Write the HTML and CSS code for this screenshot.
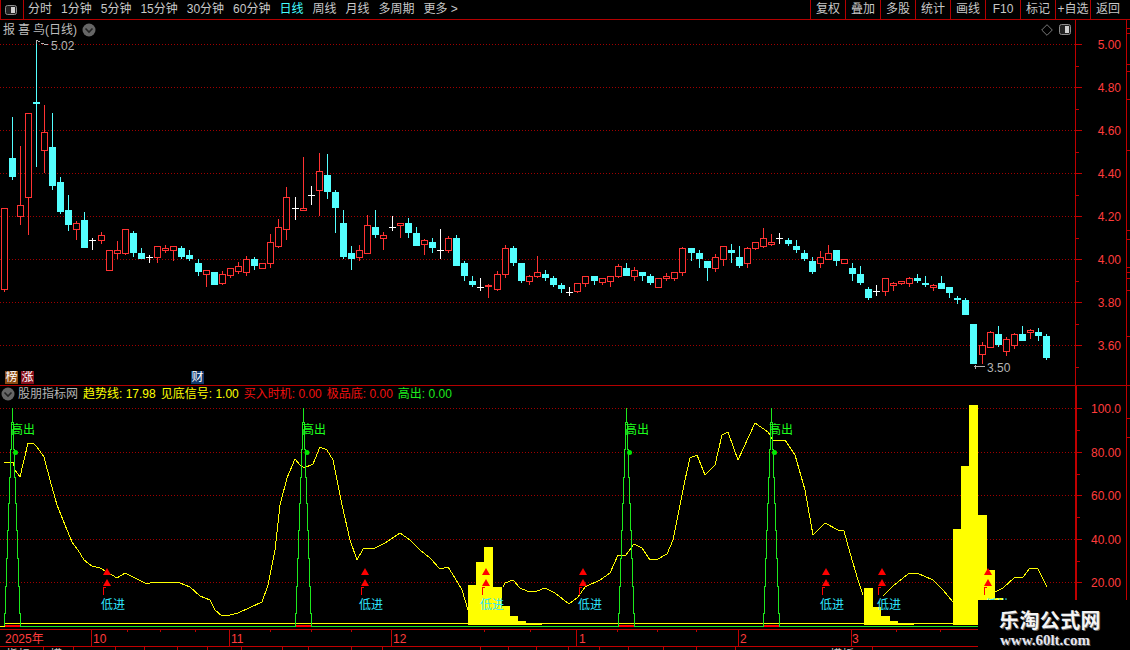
FILE: index.html
```html
<!DOCTYPE html>
<html lang="zh">
<head>
<meta charset="utf-8">
<title>报喜鸟(日线)</title>
<link rel="stylesheet" href="styles.css">
</head>
<body>
<div class="app">
  <header class="toolbar">
    <div class="panel-btn">
      <svg class="panel-icon" width="14" height="12" viewBox="0 0 14 12"><rect class="pi-frame" x="1.5" y="1.5" width="11" height="9" rx="2"/><rect class="pi-fill" x="7" y="3" width="4" height="6"/></svg>
    </div>
    <nav class="periods">
      <span>分时</span><span>1分钟</span><span>5分钟</span><span>15分钟</span><span>30分钟</span><span>60分钟</span><span class="active">日线</span><span>周线</span><span>月线</span><span>多周期</span><span>更多 &gt;</span>
    </nav>
    <nav class="tools">
      <span>复权</span><span>叠加</span><span>多股</span><span>统计</span><span>画线</span><span>F10</span><span>标记</span><span>+自选</span><span>返回</span>
    </nav>
  </header>

  <section class="pane pane-main">
    <svg id="mainChart" class="plot" width="1130" height="365" viewBox="0 20 1130 365"></svg>
    <div class="title">
      <span class="stock">报喜鸟</span><span>(日线)</span>
      <svg class="chev" width="14" height="14" viewBox="0 0 14 14"><circle class="chev-bg" cx="7" cy="7" r="6.5"/><polyline class="chev-line" points="3.5,5.5 7,9 10.5,5.5"/></svg>
    </div>
    <div class="pane-icons">
      <svg width="12" height="12" viewBox="0 0 12 12"><polygon class="diamond" points="6,0.7 11.3,6 6,11.3 0.7,6"/></svg>
      <svg width="14" height="12" viewBox="0 0 14 12"><rect class="pi-frame" x="1.5" y="0.5" width="11" height="10" rx="2"/><rect class="pi-fill" x="7" y="2" width="4" height="7"/></svg>
    </div>
    <div class="badge b-bang">榜</div>
    <div class="badge b-zhang">涨</div>
    <div class="badge b-cai">财</div>
  </section>

  <section class="pane pane-lower">
    <svg id="lowerChart" class="plot" width="1130" height="243" viewBox="0 386 1130 243"></svg>
    <div class="legend">
      <svg class="chev" width="14" height="14" viewBox="0 0 14 14"><circle class="chev-bg" cx="7" cy="7" r="6.5"/><polyline class="chev-line" points="3.5,5.5 7,9 10.5,5.5"/></svg>
      <span class="name">股朋指标网</span>
      <span class="yellow">趋势线: 17.98</span>
      <span class="yellow">见底信号: 1.00</span>
      <span class="red">买入时机: 0.00</span>
      <span class="red">极品底: 0.00</span>
      <span class="green">高出: 0.00</span>
    </div>
  </section>

  <svg id="dateAxis" class="dates" width="1130" height="17" viewBox="0 630 1130 17"></svg>
  <svg id="tabStrip" class="tabs" width="1130" height="3" viewBox="0 647 1130 3"></svg>

  <aside class="watermark">
    <div class="wm-name">乐淘公式网</div>
    <div class="wm-url">www.60lt.com</div>
  </aside>
</div>
<script src="chart.js"></script>
</body>
</html>
```
FILE: styles.css
```css
* { box-sizing: border-box; }
html, body { margin: 0; padding: 0; background: #000; }
body { font-family: "Liberation Sans", "Noto Sans CJK SC", sans-serif; font-size: 12px; color: #c8c8c8; overflow: hidden; }
.app { position: relative; width: 1130px; height: 650px; display: flex; flex-direction: column; background: #000; overflow: hidden; }

.toolbar { height: 20px; flex: none; display: flex; align-items: center; border-bottom: 1px solid #b40000; line-height: 19px; }
.panel-btn { width: 24px; height: 19px; flex: none; display: flex; align-items: center; padding-left: 3px; border-right: 1px solid #b40000; border-left: 1px solid #b40000; }
.pi-frame { fill: #222; stroke: #8c8c8c; stroke-width: 1; }
.pi-fill { fill: #d0d0d0; }
.periods { display: flex; gap: 9px; padding-left: 4px; flex: 1; }
.periods .active { color: #4ff; }
.tools { display: flex; margin-right: 5px; }
.tools span { width: 35px; height: 19px; text-align: center; border-left: 1px solid #b40000; }

.pane { position: relative; flex: none; }
.pane-main { height: 366px; border-bottom: 1px solid #b40000; }
.pane-lower { height: 244px; border-bottom: 1px solid #c00000; }
.plot { display: block; }

.title { position: absolute; left: 3px; top: 2px; display: flex; align-items: center; color: #bdbdbd; line-height: 16px; }
.stock { letter-spacing: 3px; margin-right: -3px; }
.title .chev { margin-left: 5px; }
.chev-bg { fill: #666; }
.chev-line { fill: none; stroke: #222; stroke-width: 1.6; }
.pane-icons { position: absolute; left: 1041px; top: 4px; display: flex; gap: 5px; }
.diamond { fill: none; stroke: #7a7a7a; stroke-width: 1; }

.badge { position: absolute; top: 351px; width: 13px; height: 13px; color: #fff; font-size: 12px; line-height: 13px; text-align: center; overflow: hidden; }
.b-bang { left: 5px; background: #8a4a12; }
.b-zhang { left: 21px; background: #860f1c; }
.b-cai { left: 191px; background: #10396e; }

.legend { position: absolute; left: 1px; top: 0; height: 16px; display: flex; align-items: center; gap: 5px; line-height: 16px; white-space: nowrap; }
.legend .chev { margin-right: -2px; }
.legend .name { color: #b4b4b4; }
.yellow { color: #ff0; }
.red { color: #f01010; }
.green { color: #1de91d; }

.dates, .tabs { display: block; flex: none; }
.dates { border-bottom: 0; }

.watermark { position: absolute; left: 978px; top: 600px; width: 152px; height: 50px; background: #000; padding: 8px 0 0 21px; }
.wm-name { font-family: "Noto Sans CJK SC", sans-serif; font-weight: 700; font-size: 20px; line-height: 24px; letter-spacing: 0.4px; color: #f4f4f4; text-shadow: 1px 1px 0 #666; white-space: nowrap; }
.wm-url { font-family: "Liberation Serif", serif; font-weight: 700; font-size: 15px; line-height: 16px; margin-top: 0; margin-left: 1px; color: #e6e6f0; text-shadow: 1px 1px 0 #555; white-space: nowrap; }

/* chart primitives */
.crisp { shape-rendering: crispEdges; }
.grid { stroke: #a00000; stroke-width: 1; stroke-dasharray: 1 2; shape-rendering: crispEdges; }
.axis { stroke: #c00000; stroke-width: 1; shape-rendering: crispEdges; fill: none; }
.axis-thick { stroke: #c00000; stroke-width: 2; shape-rendering: crispEdges; }
.axis-label { fill: #ff3c3c; font-size: 12px; font-family: "Liberation Sans", "Noto Sans CJK SC", sans-serif; }
.c-red { fill: #000; stroke: #ff3232; stroke-width: 1; shape-rendering: crispEdges; }
.w-red { stroke: #ff3232; stroke-width: 1; shape-rendering: crispEdges; }
.c-cyan { fill: #54ffff; shape-rendering: crispEdges; }
.w-cyan { stroke: #54ffff; stroke-width: 1; shape-rendering: crispEdges; }
.w-white { stroke: #fff; stroke-width: 1; shape-rendering: crispEdges; }
.note { fill: #b4b4b4; font-size: 12px; font-family: "Liberation Sans", sans-serif; }
.note-line { stroke: #b4b4b4; stroke-width: 1; fill: none; shape-rendering: crispEdges; }
.bar { fill: #ff0; shape-rendering: crispEdges; }
.trend { fill: none; stroke: #ff0; stroke-width: 1; shape-rendering: crispEdges; }
.base-y { stroke: #ff0; stroke-width: 1; shape-rendering: crispEdges; }
.base-g { stroke: #1de91d; stroke-width: 1; shape-rendering: crispEdges; }
.base-r { stroke: #ff0000; stroke-width: 2; shape-rendering: crispEdges; }
.spike { fill: none; stroke: #1de91d; stroke-width: 1; shape-rendering: crispEdges; }
.dot { fill: #00e800; }
.high { fill: #1dff1d; font-size: 12px; font-family: "Noto Sans CJK SC", sans-serif; }
.low { fill: #2ee6ff; font-size: 12px; font-family: "Noto Sans CJK SC", sans-serif; }
.tri { fill: #f00; }
.up { fill: none; stroke: #f00; stroke-width: 1; shape-rendering: crispEdges; }
.tab-text { fill: #c8c8c8; font-size: 12px; font-family: "Noto Sans CJK SC", sans-serif; }
```
FILE: chart.js
```js
var NS = 'http://www.w3.org/2000/svg';
function el(parent, tag, cls, attrs, text) {
  var n = document.createElementNS(NS, tag);
  if (cls) n.setAttribute('class', cls);
  for (var k in attrs) n.setAttribute(k, attrs[k]);
  if (text !== undefined) n.textContent = text;
  parent.appendChild(n);
  return n;
}
function line(p, cls, x1, y1, x2, y2) { return el(p, 'line', cls, { x1: x1, y1: y1, x2: x2, y2: y2 }); }

/* kind, body top, body bottom, wick top, wick bottom (pixel rows) */
var CANDLES = [
['r',208,290,208,292],['c',158,177,117,180],['r',205,217,146,225],['r',113,198,113,235],['c',102,104,40,167],
['r',132,151,105,173],['c',147,186,113,190],['c',182,212,177,214],['c',210,225,195,231],['r',223,230,221,240],
['c',220,248,212,248],['w',240,240,238,250],['r',235,241,232,244],['r',250,271,250,271],['r',250,254,241,259],
['r',229,254,229,255],['c',233,253,231,257],['c',253,259,248,259],['w',257,257,255,263],['r',246,258,246,263],
['r',248,251,245,253],['r',246,251,246,261],['c',248,257,246,259],['c',255,259,250,261],['c',263,272,259,276],
['r',270,275,270,287],['c',272,285,272,285],['r',274,284,271,285],['r',268,276,268,278],['r',266,272,262,274],
['r',259,273,256,276],['c',259,266,257,270],['r',263,269,263,269],['r',242,264,234,268],['r',227,247,219,248],
['r',197,230,187,240],['w',208,208,197,220],['r',208,211,157,211],['w',195,195,186,205],['r',171,191,153,216],
['c',175,192,154,199],['c',192,208,190,233],['c',223,257,210,259],['c',253,259,246,270],['r',250,258,245,261],
['r',225,254,215,254],['c',227,235,210,238],['r',235,239,232,250],['w',227,227,216,231],['r',223,226,223,238],
['c',223,233,218,238],['c',233,246,227,246],['r',240,245,239,255],['c',242,248,238,253],['w',250,250,229,259],
['r',238,251,236,253],['c',238,266,235,266],['c',263,276,261,281],['c',281,285,276,287],['w',287,287,278,291],
['r',285,287,284,298],['r',274,290,271,291],['r',248,275,245,278],['c',248,263,246,266],['c',263,281,263,283],
['r',276,282,275,285],['r',272,277,256,278],['c',274,278,270,281],['c',278,285,276,287],['c',285,289,283,293],
['w',292,292,287,296],['r',283,292,283,293],['r',276,284,276,287],['c',276,281,276,285],['r',278,283,278,285],
['r',276,282,276,287],['r',266,277,264,278],['c',268,276,263,276],['r',270,277,267,281],['c',272,276,272,281],
['c',276,283,274,285],['r',278,288,278,288],['r',276,279,273,281],['r',272,279,272,281],['r',248,273,247,276],
['c',248,253,248,261],['c',253,259,250,268],['c',261,268,261,281],['r',257,269,254,272],['r',246,260,246,266],
['c',250,253,244,263],['c',257,266,246,268],['r',248,264,247,268],['r',242,249,242,250],['r',238,247,228,248],
['r',242,245,234,246],['w',238,238,233,244],['c',240,244,238,246],['c',246,250,240,253],['c',253,259,250,261],
['c',261,272,257,274],['r',257,264,251,268],['r',253,260,245,260],['c',250,261,250,266],['r',259,264,259,264],
['c',268,274,263,281],['c',274,283,266,285],['c',289,298,287,300],['w',291,291,285,296],['r',278,292,278,296],
['r',283,286,282,291],['r',281,284,281,285],['r',278,284,277,287],['c',278,281,274,283],['c',283,285,276,287],
['r',285,288,284,291],['c',283,289,276,289],['c',287,293,287,298],['c',298,300,296,304],['c',300,315,298,315],
['c',324,364,324,364],['r',345,355,342,364],['r',332,348,331,348],['c',334,345,326,347],['r',339,352,337,356],
['r',334,346,333,349],['c',334,341,326,341],['r',330,333,329,339],['c',332,336,328,341],['c',336,358,334,360]
];
var JUMPS = [12, 24, 36, 48, 61, 73, 85, 97, 109, 121];
function candleX(i) {
  var x = 4 + 8 * i;
  JUMPS.forEach(function (j) { if (i >= j) x += 1; });
  return x;
}

var main = document.getElementById('mainChart');

/* main pane grid */
var prices = [['5.00', 44], ['4.80', 87], ['4.60', 130], ['4.40', 173], ['4.20', 216], ['4.00', 259], ['3.80', 302], ['3.60', 345]];
prices.forEach(function (p) {
  line(main, 'grid', 0, p[1] + 0.5, 1075, p[1] + 0.5);
});

/* candles */
CANDLES.forEach(function (c, i) {
  var x = candleX(i) + 0.5, kind = c[0], t = c[1], b = c[2], wt = c[3], wb = c[4];
  if (kind === 'w') {
    line(main, 'w-white', x, wt, x, wb);
    line(main, 'w-white', x - 3.5, t + 0.5, x + 3.5, t + 0.5);
    return;
  }
  var w = kind === 'r' ? 'w-red' : 'w-cyan';
  if (wt < t) line(main, w, x, wt, x, t);
  if (wb > b) line(main, w, x, b, x, wb);
  if (kind === 'r') el(main, 'rect', 'c-red', { x: x - 3, y: t + 0.5, width: 6, height: Math.max(b - t - 1, 1) });
  else el(main, 'rect', 'c-cyan', { x: x - 3.5, y: t, width: 7, height: b - t });
});

/* extreme price notes */
el(main, 'polyline', 'note-line', { points: '36.5,44 36.5,40.5 40,41.5' });
el(main, 'polyline', 'note-line', { points: '41,43 44,44 48,45' });
el(main, 'text', 'note', { x: 51, y: 50 }, '5.02');
el(main, 'polyline', 'note-line', { points: '975.5,364.5 975.5,368.5' });
el(main, 'polyline', 'note-line', { points: '974,366.5 985,366.5' });
el(main, 'text', 'note', { x: 987, y: 372 }, '3.50');

/* main axis */
line(main, 'axis', 1075.5, 20, 1075.5, 385);
line(main, 'axis', 1126.5, 20, 1126.5, 385);
prices.forEach(function (p) {
  line(main, 'axis', 1075, p[1] + 0.5, 1082, p[1] + 0.5);
  line(main, 'axis', 1075, p[1] + 22, 1079, p[1] + 22);
  el(main, 'text', 'axis-label', { x: 1121, y: p[1] + 5, 'text-anchor': 'end' }, p[0]);
});
[28, 33, 64, 71, 99, 150, 230, 239, 267, 272, 278, 290, 336].forEach(function (y) {
  line(main, 'axis', 1127, y + 0.5, 1130, y + 0.5);
});

/* lower pane */
var low = document.getElementById('lowerChart');
var levels = [['100.0', 408], ['80.00', 452], ['60.00', 495], ['40.00', 539], ['20.00', 582]];
levels.forEach(function (l) { line(low, 'grid', 0, l[1] + 0.5, 1075, l[1] + 0.5); });

var BARS = [
[468,476,585],[476,484,562],[484,493,547],[493,502,587],[502,510,606],[510,518,616],[518,526,621],[526,542,623],
[864,873,588],[873,881,607],[881,890,616],[890,898,621],[898,914,623],
[953,961,529],[961,969,466],[969,978,405],[978,987,515],[987,995,570],[995,1003,598]
];
BARS.forEach(function (b) {
  el(low, 'rect', 'bar', { x: b[0], y: b[2], width: b[1] - b[0], height: 625 - b[2] });
});

var TREND = [
'4,463 13,462 15,470 20,477 28,443 33,443 37,447 44,457 50,480 57,505 65,525 72,542 78,550 84,560 92,566 100,568 107,572 117,578 125,573 135,578 145,583 150,583 170,582 180,583 190,587 200,596 210,600 215,610 222,616 230,615 238,613 262,602 268,585 275,550 280,505 287,478 295,459 300,465 304,468 313,464 320,447 327,450 333,460 337,480 342,505 350,540 357,560 363,549 375,548 385,543 400,533 410,540 420,550 430,558 440,569 448,567 455,578 462,590 468,610',
'503,587 505,583 513,580 520,588 527,591 537,591 545,588 555,593 569,604 578,597 585,587 600,580 610,573 618,555 626,555 634,544 642,548 650,560 658,559 667,554 673,540 675,530 685,480 690,458 697,455 705,475 715,465 722,435 728,432 738,460 755,423 768,432 773,440 785,440 795,455 805,490 813,535 825,523 838,530 844,531 850,553 858,580 863,595',
'883,596 893,586 908,574 917,573 933,580 943,590 953,602',
'995,592 1003,588 1015,577 1023,577 1030,568 1038,569 1047,587'
];
TREND.forEach(function (s) { el(low, 'polyline', 'trend', { points: s }); });

/* base lines */
line(low, 'base-y', 4, 623.5, 1075, 623.5);
line(low, 'base-y', 0, 626.5, 5, 626.5);
line(low, 'base-g', 5, 626.5, 1075, 626.5);

/* stepped peaks */
var STEPS = [[626, 8], [613, 7], [586, 6], [558, 5], [530, 4], [503, 3], [477, 2], [449, 1], [422, 0], [408, 0]];
function spike(cx) {
  var left = [], right = [];
  for (var i = 0; i < STEPS.length - 1; i++) {
    var h = STEPS[i][1], a = STEPS[i][0], b = STEPS[i + 1][0];
    left.push((cx - h) + ',' + a, (cx - h) + ',' + b);
    right.push((cx + h) + ',' + a, (cx + h) + ',' + b);
  }
  el(low, 'polyline', 'spike', { points: left.join(' ') });
  el(low, 'polyline', 'spike', { points: right.join(' ') });
  line(low, 'base-r', cx - 7.5, 626, cx + 7.5, 626);
}
[[12.5, 15.5, 11], [303.5, 307, 302], [626.5, 629.5, 625], [771.5, 774.5, 769]].forEach(function (s) {
  spike(s[0]);
  el(low, 'circle', 'dot', { cx: s[1], cy: 452.5, r: 2.5 });
  el(low, 'text', 'high', { x: s[2], y: 434 }, '高出');
});

/* buy signals */
[[107, 101], [365, 359], [486, 480], [583, 578], [826, 820], [882, 877], [988, 985]].forEach(function (s) {
  var c = s[0];
  el(low, 'polygon', 'tri', { points: (c - 4) + ',575 ' + c + ',568 ' + (c + 4) + ',575' });
  el(low, 'polygon', 'tri', { points: (c - 4) + ',586 ' + c + ',579 ' + (c + 4) + ',586' });
  el(low, 'polyline', 'up', { points: (c - 3.5) + ',595 ' + (c - 3.5) + ',587 ' + (c - 1.5) + ',587' });
  el(low, 'text', 'low', { x: s[1], y: 609 }, '低进');
});

/* lower axis */
line(low, 'axis-thick', 1076, 386, 1076, 629);
line(low, 'axis', 1126.5, 386, 1126.5, 629);
levels.forEach(function (l) {
  line(low, 'axis', 1076, l[1] + 0.5, 1082, l[1] + 0.5);
  line(low, 'axis', 1076, l[1] + 22, 1080, l[1] + 22);
  el(low, 'text', 'axis-label', { x: 1121, y: l[1] + 5, 'text-anchor': 'end' }, l[0]);
});
[418, 437].forEach(function (y) { line(low, 'axis', 1127, y + 0.5, 1130, y + 0.5); });

/* date axis */
var dates = document.getElementById('dateAxis');
[127, 160, 195, 270, 311, 351, 484, 530, 617, 657, 696, 896, 940].forEach(function (x) {
  line(dates, 'axis', x + 0.5, 630, x + 0.5, 632);
});
[91, 229, 391, 576, 738, 851].forEach(function (x) {
  line(dates, 'axis', x + 0.5, 630, x + 0.5, 646);
});
line(dates, 'axis', 0, 646.5, 1130, 646.5);
[['2025年', 5], ['10', 93], ['11', 231], ['12', 393], ['1', 579], ['2', 740], ['3', 852]].forEach(function (d) {
  el(dates, 'text', 'axis-label', { x: d[1], y: 643 }, d[0]);
});

/* clipped tab strip */
var tabs = document.getElementById('tabStrip');
[43, 73, 115, 144, 177, 207, 241, 282, 308, 351, 382, 480, 508, 536, 568, 599, 628, 663, 696, 735, 872].forEach(function (x) {
  line(tabs, 'axis', x + 0.5, 647, x + 0.5, 650);
});
[['指标', 6], ['模', 50], ['模板', 830]].forEach(function (t) {
  el(tabs, 'text', 'tab-text', { x: t[1], y: 659 }, t[0]);
});
```
